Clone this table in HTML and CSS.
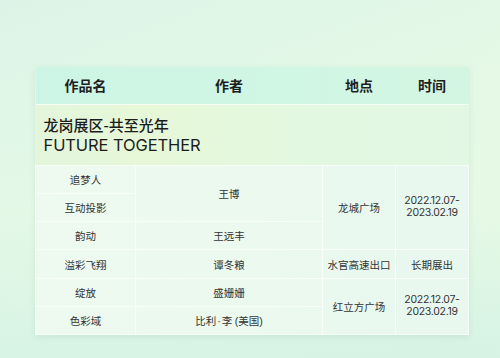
FILE: index.html
```html
<!DOCTYPE html>
<html lang="zh">
<head>
<meta charset="utf-8">
<link rel="stylesheet" href="styles.css">
</head>
<body>
<div class="page">
  <table class="exhibit">
    <colgroup>
      <col class="c1"><col class="c2"><col class="c3"><col class="c4">
    </colgroup>
    <thead>
      <tr class="head">
        <th>作品名</th><th>作者</th><th>地点</th><th>时间</th>
      </tr>
    </thead>
    <tbody>
      <tr class="title">
        <td colspan="4">
          <div class="t-cn">龙岗展区-共至光年</div>
          <div class="t-en">FUTURE TOGETHER</div>
        </td>
      </tr>
      <tr class="row">
        <td>追梦人</td>
        <td rowspan="2">王博</td>
        <td rowspan="3">龙城广场</td>
        <td rowspan="3" class="date">2022.12.07-<br>2023.02.19</td>
      </tr>
      <tr class="row">
        <td>互动投影</td>
      </tr>
      <tr class="row">
        <td>韵动</td>
        <td>王远丰</td>
      </tr>
      <tr class="row">
        <td>溢彩飞翔</td>
        <td>谭冬粮</td>
        <td>水官高速出口</td>
        <td>长期展出</td>
      </tr>
      <tr class="row">
        <td>绽放</td>
        <td>盛姗姗</td>
        <td rowspan="2">红立方广场</td>
        <td rowspan="2" class="date">2022.12.07-<br>2023.02.19</td>
      </tr>
      <tr class="row">
        <td>色彩域</td>
        <td>比利<span class="dot">·</span>李 <span class="paren">(</span>美国<span class="paren">)</span></td>
      </tr>
    </tbody>
  </table>
</div>
</body>
</html>
```

FILE: styles.css
```css
* { box-sizing: border-box; }
html, body {
  margin: 0;
  padding: 0;
  width: 500px;
  height: 358px;
  overflow: hidden;
}
body {
  background: linear-gradient(160deg, #dcf4e7 0%, #e4f8e6 40%, #e6f9e4 70%, #e3f8e4 100%);
  font-family: "Noto Sans CJK SC", "Noto Sans", sans-serif;
  color: #2a2a2a;
}
.page {
  height: 358px;
  padding: 67px 0 0 35px;
  background: linear-gradient(180deg, rgba(255,255,255,0) 60%, rgba(200,238,228,0.5) 100%);
}
.exhibit {
  width: 433px;
  border-collapse: collapse;
  table-layout: fixed;
  box-shadow: 0 2px 6px rgba(120, 170, 150, 0.18);
}
.c1 { width: 100px; }
.c2 { width: 187px; }
.c3 { width: 73px; }
.c4 { width: 73px; }

.head {
  height: 37px;
  background: linear-gradient(90deg, #cdf5e5 0%, #d0f6e4 60%, #d3f6e1 100%);
}
.head th {
  font-size: 14px;
  font-weight: 700;
  color: #1e1e1e;
  text-align: center;
  padding: 0;
}
.title {
  height: 61px;
  background: linear-gradient(90deg, #e3f6dc 0%, #e7f8d8 25%, #e3f8e0 60%, #e2f8e4 100%);
  border-top: 1px solid rgba(255,255,255,0.7);
}
.title td {
  padding: 0 0 0 8px;
  text-align: left;
}
.t-cn {
  font-size: 15px;
  font-weight: 500;
  line-height: 20px;
  color: #1c1c1c;
}
.t-en {
  font-family: "Inter", "Liberation Sans", sans-serif;
  font-size: 16.5px;
  font-weight: 400;
  line-height: 20px;
  color: #1c1c1c;
  letter-spacing: -0.1px;
}
tbody .row {
  height: 28.3px;
  background: linear-gradient(90deg, #eefaef 0%, #ebf9ef 50%, #e8f8ee 100%);
}
tbody .row td {
  border: 1px solid rgba(255,255,255,0.65);
  font-size: 10.5px;
  color: #333;
  text-align: center;
  vertical-align: middle;
  padding: 0;
}
tbody tr.title td { border: none; }
.dot, .paren {
  font-family: "Liberation Sans", sans-serif;
}
.dot { padding: 0 1px; }
.date {
  font-family: "Inter", "Liberation Sans", sans-serif;
  font-size: 11px;
  line-height: 12px;
  letter-spacing: -0.3px;
}
```
